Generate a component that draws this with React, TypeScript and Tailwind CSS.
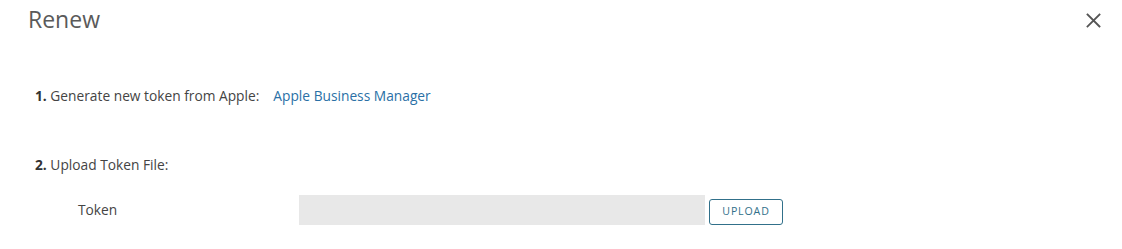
import React from "react";

export default function App() {
  return (
    <div className="w-[1122px] h-[249px] bg-white text-[#555] font-['Open_Sans',sans-serif] overflow-hidden">
      {/* Header */}
      <div className="flex items-start justify-between pl-[28px] pr-[18px] pt-[3px]">
        <h1 className="text-[23px] leading-[32px] font-normal text-[#5a5a5a]">Renew</h1>
        <button className="mt-[6px] w-[22px] h-[22px] flex items-center justify-center text-[#555]" title="Close">
          <svg width="15" height="15" viewBox="0 0 15 15" fill="none" stroke="currentColor" strokeWidth="1.8" strokeLinecap="square">
            <path d="M1.5 1.5 L13.5 13.5 M13.5 1.5 L1.5 13.5" />
          </svg>
        </button>
      </div>

      {/* Step 1 */}
      <div className="flex items-center pl-[35px] mt-[52px] text-[13.75px] leading-[18px]">
        <span className="text-[#444]">
          <span className="font-bold text-[#333]">1.</span> Generate new token from Apple:
        </span>
        <a href="#" className="ml-[14px] text-[#2a70a6]">Apple Business Manager</a>
      </div>

      {/* Step 2 */}
      <div className="pl-[35px] mt-[51px] text-[13.75px] leading-[18px] text-[#444]">
        <span className="font-bold text-[#333]">2.</span> Upload Token File:
      </div>

      <div className="flex items-center mt-[21px]">
        <div className="w-[299px] pl-[78px] text-[13.75px] text-[#444]">Token</div>
        <div className="w-[406px] h-[30px] bg-[#e8e8e8]" />
        <button className="ml-[4px] w-[74px] h-[26px] mt-[3px] border border-[#31708a] rounded-[3px] text-[10.6px] tracking-[0.08em] text-[#31708a] flex items-center justify-center">
          UPLOAD
        </button>
      </div>
    </div>
  );
}
